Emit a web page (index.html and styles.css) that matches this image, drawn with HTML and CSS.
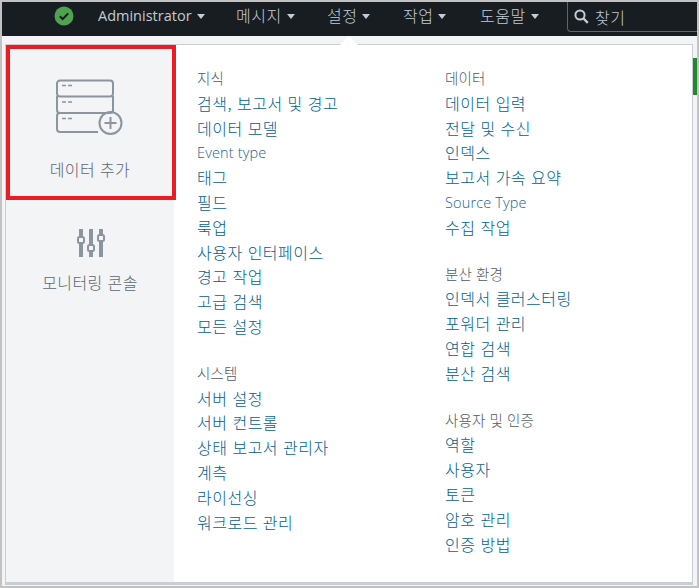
FILE: index.html
```html
<!DOCTYPE html>
<html lang="ko">
<head>
<meta charset="utf-8">
<title>설정</title>
<link rel="stylesheet" href="styles.css">
</head>
<body>
<div class="frame">
  <header class="nav">
    <svg class="status" width="20" height="20" viewBox="0 0 20 20"><circle cx="10" cy="10" r="9.5" fill="#4fa34f"/><path d="M5.8 10.2l2.9 2.8 5.5-5.6" fill="none" stroke="#171d21" stroke-width="2"/></svg>
    <nav class="menu-items">
      <a class="nav-item admin">Administrator<i class="caret"></i></a>
      <a class="nav-item msg">메시지<i class="caret"></i></a>
      <a class="nav-item set">설정<i class="caret"></i></a>
      <a class="nav-item job">작업<i class="caret"></i></a>
      <a class="nav-item help">도움말<i class="caret"></i></a>
    </nav>
    <div class="search">
      <svg width="15" height="15" viewBox="0 0 15 15"><circle cx="6" cy="6" r="4.6" fill="none" stroke="#c3cbd4" stroke-width="2"/><path d="M9.5 9.5l4.3 4.3" stroke="#c3cbd4" stroke-width="2.4"/></svg>
      <span>찾기</span>
    </div>
  </header>
  <main class="stage">
    <div class="green"></div>
    <section class="dropdown">
      <div class="notch"></div>
      <aside class="side">
        <div class="side-item add">
          <svg width="70" height="58" viewBox="0 0 70 58" fill="none" stroke="#8a95a0" stroke-width="2"><path d="M5 1.500h50a3 3 0 0 1 3 3v10a3 3 0 0 1-3 3H5a3 3 0 0 1-3-3v-10a3 3 0 0 1 3-3z"/><path d="M2 17v14a3 3 0 0 0 3 3h50a3 3 0 0 0 3-3V17"/><path d="M5 34a3 3 0 0 0-3 3v13a3 3 0 0 0 3 3h38M5 34h39"/><path d="M58 31v3"/><circle cx="55.500" cy="44" r="11"/><path d="M55.500 38v12M49.500 44h12"/><path d="M7 6.500h4M13 6.500h4M7 23h4M13 23h4M7 39.500h4M13 39.500h4" stroke-width="1.500"/></svg>
          <span>데이터 추가</span>
        </div>
        <div class="side-item mon">
          <svg width="28" height="30" viewBox="0 0 28 30" fill="#8a95a0"><rect x="2" y="1" width="4" height="28"/><rect x="12" y="1" width="4" height="28"/><rect x="22" y="1" width="4" height="28"/><g fill="#f2f4f5" stroke="#8a95a0" stroke-width="2"><rect x="1" y="9" width="6" height="6" rx="1.500"/><rect x="11" y="17" width="6" height="6" rx="1.500"/><rect x="21" y="7" width="6" height="6" rx="1.500"/></g></svg>
          <span>모니터링 콘솔</span>
        </div>
        <div class="highlight"></div>
      </aside>
      <div class="col first">
        <h3>지식</h3>
        <a>검색, 보고서 및 경고</a>
        <a>데이터 모델</a>
        <a class="latin">Event type</a>
        <a>태그</a>
        <a>필드</a>
        <a>룩업</a>
        <a>사용자 인터페이스</a>
        <a>경고 작업</a>
        <a>고급 검색</a>
        <a>모든 설정</a>
        <h3 class="gap">시스템</h3>
        <a>서버 설정</a>
        <a>서버 컨트롤</a>
        <a>상태 보고서 관리자</a>
        <a>계측</a>
        <a>라이선싱</a>
        <a>워크로드 관리</a>
      </div>
      <div class="col second">
        <h3>데이터</h3>
        <a>데이터 입력</a>
        <a>전달 및 수신</a>
        <a>인덱스</a>
        <a>보고서 가속 요약</a>
        <a class="latin">Source Type</a>
        <a>수집 작업</a>
        <h3 class="gap">분산 환경</h3>
        <a>인덱서 클러스터링</a>
        <a>포워더 관리</a>
        <a>연합 검색</a>
        <a>분산 검색</a>
        <h3 class="gap">사용자 및 인증</h3>
        <a>역할</a>
        <a>사용자</a>
        <a>토큰</a>
        <a>암호 관리</a>
        <a>인증 방법</a>
      </div>
    </section>
  </main>
</div>
</body>
</html>
```
FILE: styles.css
```css
* { box-sizing: border-box; }
html, body { margin: 0; height: 100%; overflow: hidden; }
body { font-family: "Noto Sans CJK KR", "Noto Sans", sans-serif; background: #fff; font-weight: 300; }
.frame { width: 699px; height: 588px; border: 2px solid #c2c2c2; display: flex; flex-direction: column; background: #f2f4f5; overflow: hidden; }
.nav { height: 34px; flex: none; background: #171d21; display: flex; align-items: flex-start; color: #c3cbd4; font-size: 16px; letter-spacing: 0.5px; padding-left: 52px; }
.status { margin-top: 4px; flex: none; }
.menu-items { display: flex; flex: none; margin-left: 24px; height: 27px; align-items: center; line-height: 27px; }
.nav-item { display: flex; align-items: center; white-space: nowrap; }
.admin { font-family: "Open Sans", "Noto Sans", sans-serif; font-size: 14.5px; letter-spacing: 0; width: 138px; font-weight: 400; }
.msg { width: 91px; }
.set { width: 76px; }
.job { width: 77px; }
.help { width: 87px; }
.caret { width: 0; height: 0; margin-left: 5px; margin-top: 2px; border: 4.5px solid transparent; border-top: 5px solid #c3cbd4; border-bottom: 0; }
.search { flex: 1; height: 31px; margin-top: -1px; border: 1px solid #5c6773; border-right: 0; border-radius: 0 0 0 4px; display: flex; align-items: center; gap: 6px; padding-left: 6px; }
.stage { flex: 1; position: relative; padding: 9px 5px 4px 4px; }
.green { position: absolute; right: 0; top: 22px; width: 4px; height: 37px; background: #1f8a2b; }
.dropdown { position: relative; height: 537px; display: flex; background: #fff; box-shadow: 0 0 0 1px #c8ced3, 0 2px 0 1px #c8ced3; }
.notch { position: absolute; left: 334px; top: -9px; width: 0; height: 0; border-left: 9px solid transparent; border-right: 9px solid transparent; border-bottom: 9px solid #fff; }
.side { position: relative; width: 168px; flex: none; background: #f2f4f5; display: flex; flex-direction: column; align-items: center; padding-top: 34px; color: #5c6773; font-size: 16px; letter-spacing: 0.4px; }
.side-item { display: flex; flex-direction: column; align-items: center; }
.add { height: 148px; gap: 20px; }
.mon { gap: 12px; padding-top: 1px; }
.mon svg { margin-left: 2px; }
.highlight { position: absolute; left: 0; top: 0; width: 170px; height: 155px; border: 4px solid #ed1c24; }
.col { display: flex; flex-direction: column; flex: none; padding-top: 21px; font-size: 16px; letter-spacing: 0.5px; line-height: 24.8px; }
.first { width: 248px; margin-left: 23px; }
.col h3 { margin: 0; font-size: 14.5px; font-weight: 300; letter-spacing: 0.1px; color: #4f5a66; line-height: 24.8px; }
.col h3.gap { margin-top: 22px; }
.col a { color: #00618f; white-space: nowrap; }
.col a.latin { font-family: "Open Sans", "Noto Sans", sans-serif; font-size: 14.5px; font-weight: 300; letter-spacing: 0.15px; color: #1c5f94; padding-top: 1px; margin-bottom: -1px; }
```
